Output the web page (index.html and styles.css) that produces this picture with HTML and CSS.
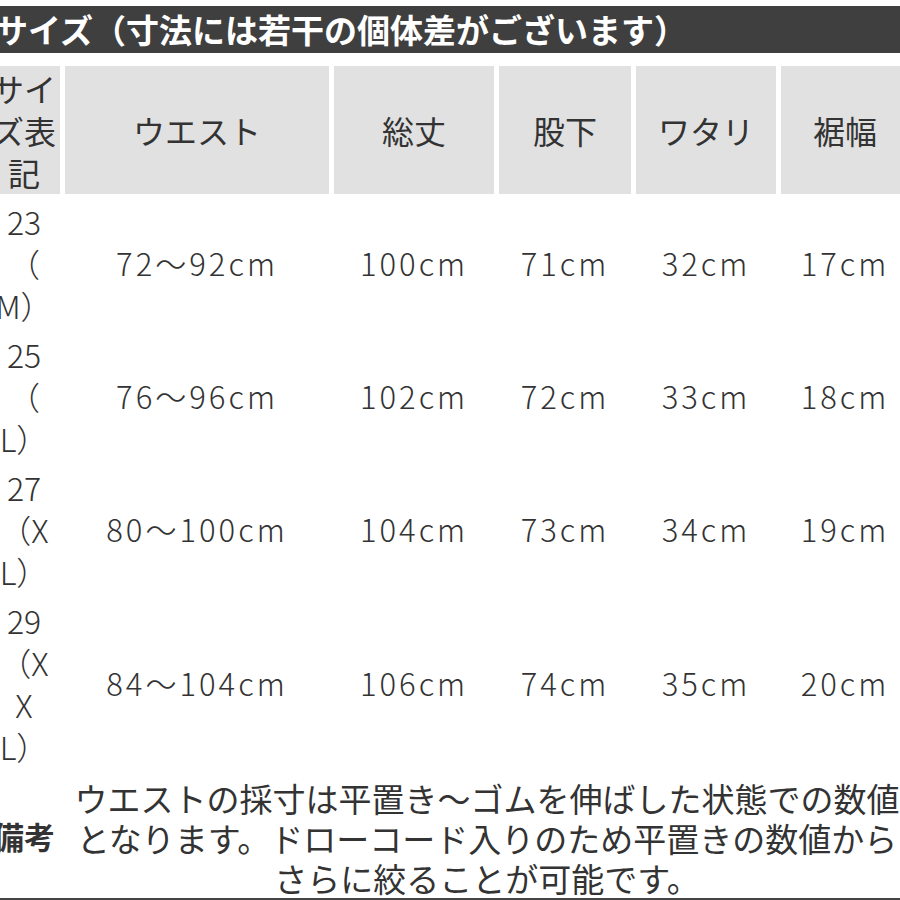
FILE: index.html
```html
<!DOCTYPE html>
<html lang="ja">
<head>
<meta charset="utf-8">
<title>サイズ</title>
<link rel="stylesheet" href="styles.css">
</head>
<body>
<div class="page">
  <div class="title">サイズ（寸法には若干の個体差がございます）</div>
  <div class="sheet">
    <table class="size">
      <colgroup>
        <col class="c0"><col class="c1"><col class="c2"><col class="c3"><col class="c4"><col class="c5">
      </colgroup>
      <thead>
        <tr>
          <th class="lab">サイ<br>ズ表<br>記</th>
          <th>ウエスト</th>
          <th>総丈</th>
          <th>股下</th>
          <th>ワタリ</th>
          <th>裾幅</th>
        </tr>
      </thead>
      <tbody>
        <tr>
          <td class="lab">23<br>（<br>M）</td>
          <td>72～92cm</td><td>100cm</td><td>71cm</td><td>32cm</td><td>17cm</td>
        </tr>
        <tr>
          <td class="lab">25<br>（<br>L）</td>
          <td>76～96cm</td><td>102cm</td><td>72cm</td><td>33cm</td><td>18cm</td>
        </tr>
        <tr>
          <td class="lab">27<br>（X<br>L）</td>
          <td>80～100cm</td><td>104cm</td><td>73cm</td><td>34cm</td><td>19cm</td>
        </tr>
        <tr>
          <td class="lab">29<br>（X<br>X<br>L）</td>
          <td>84～104cm</td><td>106cm</td><td>74cm</td><td>35cm</td><td>20cm</td>
        </tr>
      </tbody>
    </table>
    <div class="note">
      <div class="note-head">備考</div>
      <div class="note-body">ウエストの採寸は平置き～ゴムを伸ばした状態での数値<br>となります。ドローコード入りのため平置きの数値から<br>さらに絞ることが可能です。</div>
    </div>
  </div>
</div>
</body>
</html>
```

FILE: styles.css
```css
html, body {
  margin: 0;
  padding: 0;
  background: #ffffff;
}
body {
  font-family: "Noto Sans CJK JP", "Noto Sans", sans-serif;
  color: #333333;
}
.page {
  width: 900px;
  height: 900px;
  overflow: hidden;
  padding-top: 6px;
  box-sizing: border-box;
}
.title {
  height: 47px;
  background: #3f3f3f;
  color: #ffffff;
  font-weight: bold;
  font-size: 33px;
  line-height: 47px;
  white-space: nowrap;
  margin-left: -5px;
}
.sheet {
  width: 931px;
  margin-left: -17px;
  margin-top: 8px;
}
.size {
  border-collapse: separate;
  border-spacing: 5px;
  table-layout: fixed;
  width: 931px;
}
.c0 { width: 72px; }
.c1 { width: 264px; }
.c2 { width: 160px; }
.c3 { width: 132px; }
.c4 { width: 140px; }
.c5 { width: 128px; }
.size th {
  background: #e1e1e1;
  font-weight: normal;
  font-size: 32px;
  line-height: 42px;
  height: 128px;
  padding: 0;
  text-align: center;
  vertical-align: middle;
  color: #333;
}
.size td {
  font-size: 31px;
  font-weight: 300;
  line-height: 42px;
  padding: 1px 0;
  text-align: center;
  vertical-align: middle;
  letter-spacing: 3px;
}
.size td.lab {
  letter-spacing: 0;
  font-size: 32px;
}
.note {
  display: grid;
  grid-template-columns: 72px 1fr;
  column-gap: 5px;
  padding: 0 5px;
  border-bottom: 2px solid #444;
  align-items: center;
}
.note-head {
  font-weight: bold;
  font-size: 31px;
  text-align: center;
}
.note-body {
  font-size: 33px;
  line-height: 40px;
  text-align: center;
  white-space: nowrap;
  padding: 5px 0 0;
}
```
